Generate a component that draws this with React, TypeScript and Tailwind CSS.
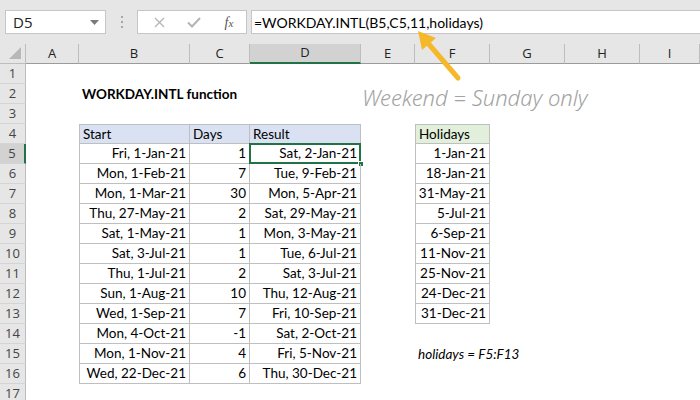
import React from 'react';

const cols = ['A', 'B', 'C', 'D', 'E', 'F', 'G', 'H', 'I'];

const rows: [string, string, string][] = [
  ['Fri, 1-Jan-21', '1', 'Sat, 2-Jan-21'],
  ['Mon, 1-Feb-21', '7', 'Tue, 9-Feb-21'],
  ['Mon, 1-Mar-21', '30', 'Mon, 5-Apr-21'],
  ['Thu, 27-May-21', '2', 'Sat, 29-May-21'],
  ['Sat, 1-May-21', '1', 'Mon, 3-May-21'],
  ['Sat, 3-Jul-21', '1', 'Tue, 6-Jul-21'],
  ['Thu, 1-Jul-21', '2', 'Sat, 3-Jul-21'],
  ['Sun, 1-Aug-21', '10', 'Thu, 12-Aug-21'],
  ['Wed, 1-Sep-21', '7', 'Fri, 10-Sep-21'],
  ['Mon, 4-Oct-21', '-1', 'Sat, 2-Oct-21'],
  ['Mon, 1-Nov-21', '4', 'Fri, 5-Nov-21'],
  ['Wed, 22-Dec-21', '6', 'Thu, 30-Dec-21'],
];

const holidays = [
  '1-Jan-21',
  '18-Jan-21',
  '31-May-21',
  '5-Jul-21',
  '6-Sep-21',
  '11-Nov-21',
  '25-Nov-21',
  '24-Dec-21',
  '31-Dec-21',
];

const grid =
  'grid grid-cols-[26px_53px_111px_60px_111px_54px_75px_75px_75px_1fr]';

const cellFont = { fontFamily: 'Lato, "Liberation Sans", sans-serif' };

type CellProps = {
  children?: React.ReactNode;
  className?: string;
};

const Cell: React.FC<CellProps> = ({ children, className = '' }) => (
  <div
    className={`h-[20px] flex items-center px-[3px] text-[13.5px] text-black whitespace-nowrap ${className}`}
    style={cellFont}
  >
    {children}
  </div>
);

const box = 'border-r border-b border-[#bfbfbf]';

export default function App() {
  const sheetRows = Array.from({ length: 17 }, (_, i) => i + 1);

  const renderRow = (r: number) => {
    const data = r >= 5 && r <= 16 ? rows[r - 5] : null;
    const hol = r >= 5 && r <= 13 ? holidays[r - 5] : null;
    const top = r === 4 ? 'border-t' : '';
    const inTable = r >= 4 && r <= 16;
    const inHol = r >= 4 && r <= 13;

    return (
      <div key={r} className={grid}>
        <div
          className={`h-[20px] flex items-center justify-center text-[13px] text-[#444] border-b border-[#d4d4d4] ${
            r === 5
              ? 'bg-[#d2d2d2] border-r-2 border-r-[#217346]'
              : 'bg-[#e6e6e6] border-r border-r-[#bdbdbd]'
          }`}
          style={{ fontFamily: '"Open Sans", "Noto Sans", sans-serif' }}
        >
          {r}
        </div>
        <Cell />
        {inTable ? (
          <>
            <Cell
              className={`${box} ${top} border-l ${r === 4 ? 'bg-[#d9e1f2]' : 'justify-end'}`}
            >
              {r === 4 ? 'Start' : data?.[0]}
            </Cell>
            <Cell className={`${box} ${top} ${r === 4 ? 'bg-[#d9e1f2]' : 'justify-end'}`}>
              {r === 4 ? 'Days' : data?.[1]}
            </Cell>
            <Cell
              className={`${box} ${top} relative ${r === 4 ? 'bg-[#d9e1f2]' : 'justify-end'}`}
            >
              {r === 4 ? 'Result' : data?.[2]}
              {r === 5 && (
                <>
                  <div className="absolute left-[-1px] top-[-1px] right-[-1px] bottom-[-1px] border-2 border-[#217346] pointer-events-none" />
                  <div className="absolute right-[-4px] bottom-[-4px] w-[6px] h-[6px] bg-[#217346] border border-white" />
                </>
              )}
            </Cell>
          </>
        ) : (
          <>
            <Cell className="overflow-visible">
              {r === 2 && <span className="font-bold">WORKDAY.INTL function</span>}
            </Cell>
            <Cell />
            <Cell />
          </>
        )}
        <Cell />
        {inHol ? (
          <Cell className={`${box} ${top} border-l ${r === 4 ? 'bg-[#e2efda]' : 'justify-end'}`}>
            {r === 4 ? 'Holidays' : hol}
          </Cell>
        ) : (
          <Cell>{r === 15 && <span className="italic">holidays = F5:F13</span>}</Cell>
        )}
        <Cell />
        <Cell />
        <Cell />
      </div>
    );
  };

  return (
    <div className="relative w-[700px] h-[400px] overflow-hidden bg-white">
      {/* formula bar */}
      <div className="h-[44px] bg-[#e6e6e6] flex items-start pt-[10px]">
        <div
          className="ml-[5px] w-[101px] h-[24px] bg-white border border-[#c6c6c6] flex items-center justify-between pl-[7px] pr-[6px] text-[15px] text-[#222]"
          style={{ fontFamily: '"Open Sans", "Noto Sans", sans-serif' }}
        >
          <span>D5</span>
          <svg width="9" height="5" viewBox="0 0 9 5">
            <path d="M0 0 L9 0 L4.5 5 Z" fill="#7a7a7a" />
          </svg>
        </div>
        <div className="w-[31px] h-[24px] flex flex-col items-center justify-center gap-[3px]">
          <span className="w-[2px] h-[2px] bg-[#a6a6a6]" />
          <span className="w-[2px] h-[2px] bg-[#a6a6a6]" />
          <span className="w-[2px] h-[2px] bg-[#a6a6a6]" />
        </div>
        <div className="w-[110px] h-[24px] bg-white border border-[#c6c6c6] flex items-center">
          <div className="w-[38px] flex justify-center pl-[4px]">
            <svg width="11" height="11" viewBox="0 0 11 11">
              <path d="M1 1 L10 10 M10 1 L1 10" stroke="#b4b4b4" strokeWidth="1.3" />
            </svg>
          </div>
          <div className="w-[36px] flex justify-center">
            <svg width="14" height="11" viewBox="0 0 14 11">
              <path d="M1 5.5 L5 9.5 L13 1" stroke="#b4b4b4" strokeWidth="2" fill="none" />
            </svg>
          </div>
          <div
            className="w-[34px] flex justify-center text-[14px] italic text-[#555]"
            style={{ fontFamily: '"Liberation Serif", serif' }}
          >
            f<span className="text-[11px] mt-[3px]">x</span>
          </div>
        </div>
        <div
          className="ml-[4px] flex-1 h-[24px] bg-white border border-[#c6c6c6] border-r-0 flex items-center pl-[2px] text-[14px] text-black"
          style={cellFont}
        >
          =WORKDAY.INTL(B5,C5,11,holidays)
        </div>
      </div>

      {/* column headers */}
      <div className={`${grid} h-[20px]`}>
        <div className="h-[20px] bg-[#e6e6e6] border-r border-b border-[#bdbdbd] relative">
          <svg className="absolute right-[4px] bottom-[4px]" width="12" height="12" viewBox="0 0 12 12">
            <path d="M12 0 L12 12 L0 12 Z" fill="#b7b7b7" />
          </svg>
        </div>
        {cols.map((c) => (
          <div
            key={c}
            className={`h-[20px] flex items-center justify-center text-[13px] text-[#222] border-r border-[#bdbdbd] ${
              c === 'D'
                ? 'bg-[#d2d2d2] border-b-2 border-b-[#217346]'
                : 'bg-[#e6e6e6] border-b border-b-[#9b9b9b]'
            }`}
            style={{ fontFamily: '"Open Sans", "Noto Sans", sans-serif' }}
          >
            {c}
          </div>
        ))}
      </div>

      {/* sheet */}
      <div className="relative">
        {sheetRows.map(renderRow)}

        <div
          className="absolute left-[362px] top-[17px] text-[22px] text-[#a3a3a3] italic font-light whitespace-nowrap pointer-events-none"
          style={{ fontFamily: '"Noto Sans", sans-serif' }}
        >
          Weekend = Sunday only
        </div>
      </div>

      {/* callout arrow */}
      <svg className="absolute left-0 top-0 pointer-events-none" width="700" height="400">
        <line x1="458" y1="78" x2="427" y2="42" stroke="#f5b829" strokeWidth="5" strokeLinecap="round" />
        <polygon points="418,31 436,38 422,50" fill="#f5b829" />
      </svg>
    </div>
  );
}
